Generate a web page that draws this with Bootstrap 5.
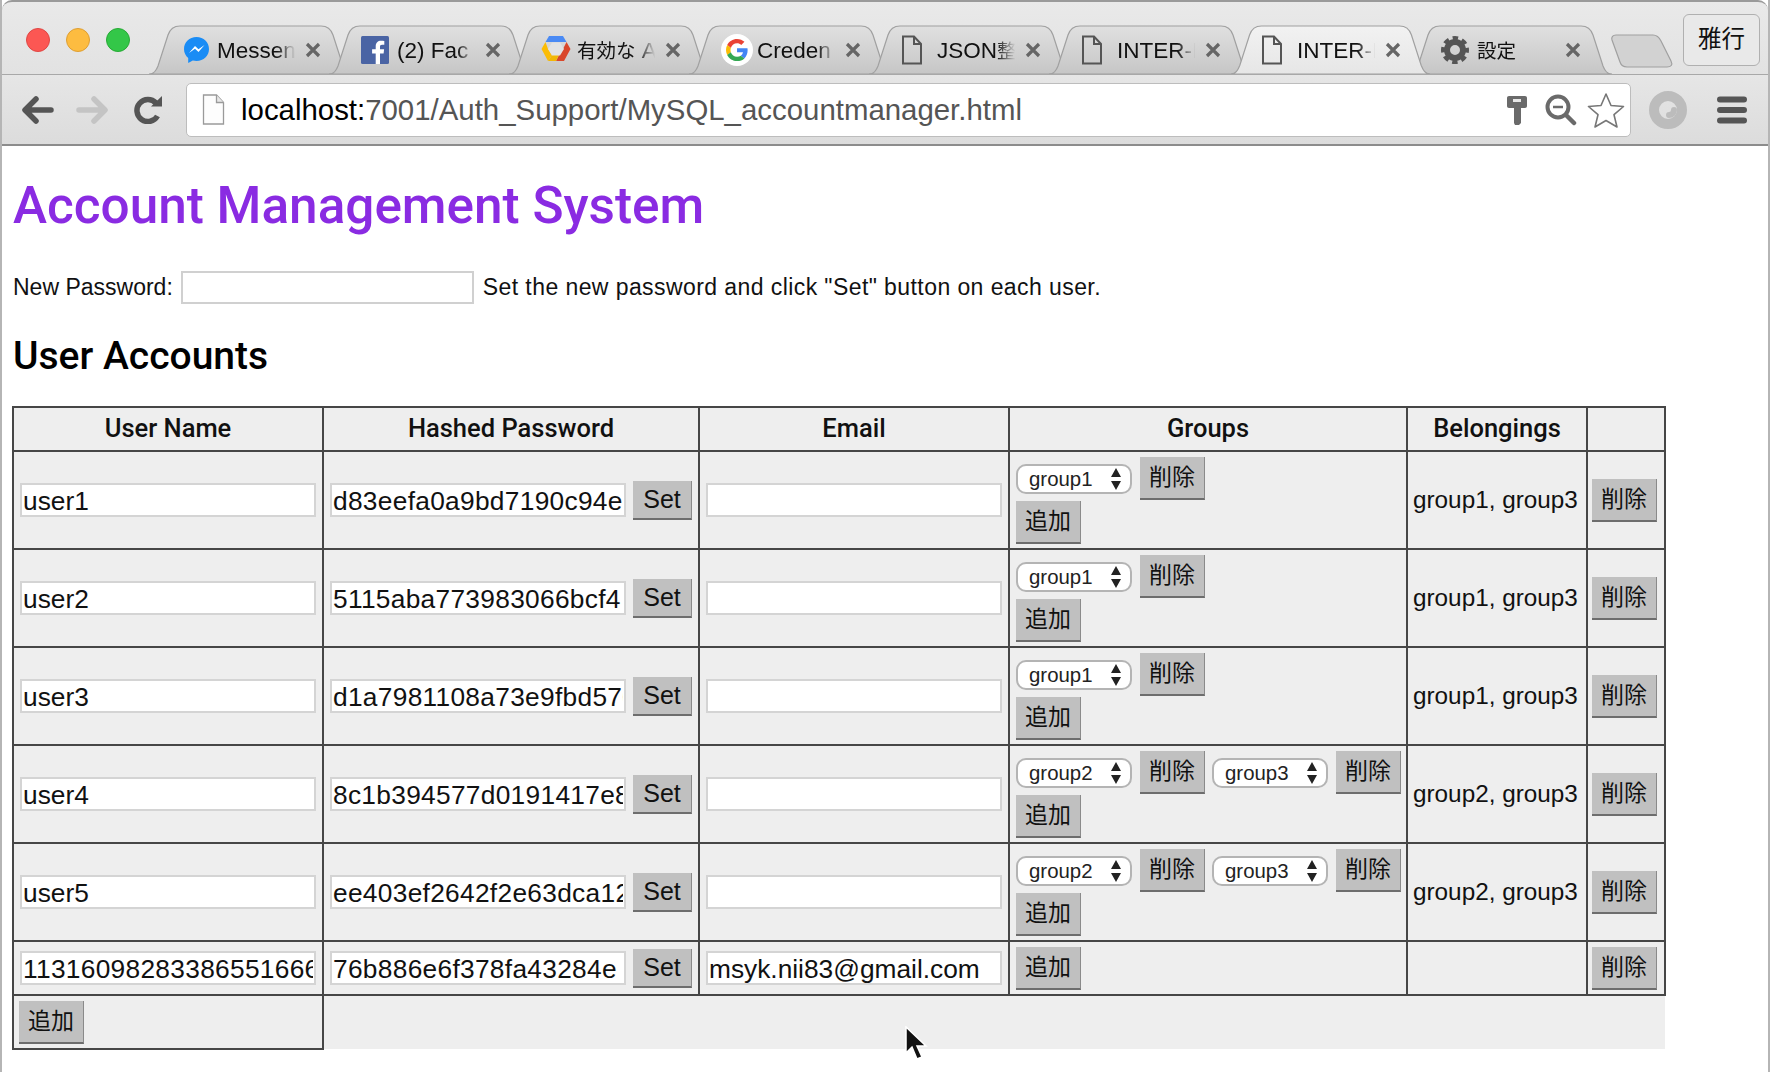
<!DOCTYPE html>
<html lang="ja">
<head>
  <meta charset="UTF-8" />
  <title>Account Management System</title>
  <link href="https://cdn.jsdelivr.net/npm/bootstrap@5.3.3/dist/css/bootstrap.min.css" rel="stylesheet"/>
  <style>
    html, body { height: 100%; }
    body {
      background: #fff;
      color: #111;
      font-family: "Liberation Sans", "Noto Sans CJK JP", sans-serif;
      overflow: hidden;
      border-left: 2px solid #b5b5b5;
      border-right: 2px solid #b5b5b5;
    }

    /* browser chrome */
    .tabstrip {
      height: 75px;
      padding-left: 147px;
      background: linear-gradient(#e9e9e9, #e2e2e2);
      border-top: 2px solid #9a9a9a;
      border-bottom: 1px solid #a8a8a8;
      border-top-left-radius: 10px;
      border-top-right-radius: 10px;
    }
    .traffic { left: 24px; top: 26px; }
    .dot { width: 24px; height: 24px; border-radius: 50%; }
    .dot-red { background: #fc5753; border: 1px solid #df4744; }
    .dot-amber { background: #fdbc40; border: 1px solid #de9f34; }
    .dot-green { background: #33c748; border: 1px solid #27aa35; }
    .tab-item {
      width: 203px;
      height: 49px;
      margin-top: 23px;
      margin-right: -23px;
      padding-left: 32px;
      font-size: 22.5px;
      color: #111;
    }
    .tab-item.is-active { z-index: 2; }
    .tab-shape { left: 0; top: 0; width: 203px; height: 49px; }
    .tab-icon { width: 36px; height: 30px; z-index: 1; }
    .msg-icon { margin-left: 2px; }
    .tab-title {
      width: 80px;
      padding-top: 2px;
      white-space: nowrap;
      overflow: hidden;
      z-index: 1;
      -webkit-mask-image: linear-gradient(to right, #000 75%, transparent 98%);
      mask-image: linear-gradient(to right, #000 75%, transparent 98%);
    }
    .cjk-part { font-size: 19.5px; }
    .tab-close { margin-left: 8px; z-index: 1; }
    .new-tab { left: 1607px; top: 32px; }
    .profile-btn {
      right: 8px;
      top: 12px;
      width: 77px;
      height: 52px;
      font-size: 23.5px;
      border: 1px solid #b0b0b0;
      border-radius: 6px;
      background: #e9e9e9;
    }
    .toolbar {
      height: 71px;
      background: linear-gradient(#e6e6e6, #dcdcdc);
      border-bottom: 2px solid #8c8c8c;
      padding-left: 20px;
    }
    .tool-slot { width: 54px; }
    .reload-icon { margin-left: 4px; }
    .urlbar {
      width: 1445px;
      height: 54px;
      margin-left: 2px;
      background: #fff;
      border: 1px solid #bdbdbd;
      border-radius: 5px;
      padding: 0 5px 0 15px;
      font-size: 29.4px;
      color: #555;
    }
    .url-host { color: #000; }
    .url-text { margin-left: 16px; padding-top: 1px; white-space: nowrap; }
    .url-key { margin-right: 17px; }
    .url-zoom { margin-right: 10px; }
    .ext-icon { margin-left: 18px; }
    .menu-icon { margin-left: 30px; }

    /* page */
    .page-body { padding: 0 0 0 10px; font-size: 23px; }
    .page-title {
      color: #8a2be2;
      font-family: Roboto, "Liberation Sans", sans-serif;
      font-size: 51.3px;
      font-weight: 500;
      line-height: 58px;
      margin: 31px 0 36px;
      padding-left: 1px;
    }
    .pw-row { height: 33px; gap: 8px; padding-left: 1px; }
    .pw-input {
      width: 293px;
      height: 33px;
      border: 2px solid #d0d0d0;
      border-radius: 0;
      padding: 0 2px;
    }
    .pw-note { margin-left: 1px; letter-spacing: .42px; }
    .sec-title {
      font-family: Roboto, "Liberation Sans", sans-serif;
      font-size: 39px;
      font-weight: 500;
      line-height: 44px;
      margin: 30px 0 28px;
      padding-left: 1px;
      color: #000;
    }
    .acct-table {
      --bs-table-bg: #eeeeee;
      --bs-table-color: #111;
      width: 1652px;
      table-layout: fixed;
      border-collapse: collapse;
      margin: 0;
    }
    .col-w1 { width: 310px; }
    .col-w2 { width: 376px; }
    .col-w3 { width: 310px; }
    .col-w4 { width: 398px; }
    .col-w5 { width: 180px; }
    .col-w6 { width: 78px; }
    .acct-table > * > tr > * {
      border: 2px solid #464646;
      padding: 0 6px;
      vertical-align: middle;
      background: #eee;
      box-shadow: none;
    }
    .acct-table th {
      height: 44px;
      font-family: Roboto, "Liberation Sans", sans-serif;
      font-size: 25.5px;
      font-weight: 500;
      text-align: center;
      padding: 0 0 2px;
    }
    .row-tall > td { height: 98px; }
    .row-short > td { height: 54px; }
    .row-add > td { height: 54px; padding: 0 5px; }
    .acct-table > tbody > tr > td.add-rest { border: 0; border-top: 2px solid #464646; }
    .acct-table > tbody > tr > td.row-del { padding-left: 4px; }
    .cell-input {
      display: block;
      width: 296px;
      height: 34px;
      border: 2px solid #d4d4d4;
      border-radius: 0;
      padding: 3px 1px 0;
      font-size: 26.3px;
      color: #111;
      background: #fff;
    }
    .cell-input:focus { outline: 0; box-shadow: none; }
    .hash-wrap { gap: 7px; }
    .hash-wrap .cell-input, .cell-input.is-digits { letter-spacing: .3px; }
    .act-btn {
      --bs-btn-padding-x: 0;
      --bs-btn-padding-y: 0;
      --bs-btn-bg: #c0c0c0;
      --bs-btn-color: #111;
      width: 65px;
      height: 43px;
      flex: none;
      font-size: 23px;
      line-height: 1;
      border: 0;
      border-right: 1px solid #8a8a8a;
      border-bottom: 2px solid #6d6d6d;
      border-radius: 0;
      background: #c0c0c0;
      color: #111;
    }
    .set-btn { width: 59px; height: 39px; font-size: 25px; }
    .group-line { gap: 7px; margin-top: 1px; }
    .group-pair { gap: 8px; }
    .group-select {
      width: 116px;
      height: 30px;
      padding: 0 0 0 11px;
      font-size: 20.4px;
      line-height: 26px;
      color: #222;
      border: 2px solid #b4b4b4;
      border-radius: 10px;
      background-color: #fff;
      background-size: 12px 24px;
      background-position: right 8px center;
      background-repeat: no-repeat;
      background-image: url("data:image/svg+xml,%3Csvg xmlns='http://www.w3.org/2000/svg' viewBox='0 0 12 24'%3E%3Cpath d='M6 1l5 9H1zM6 23l5-9H1z' fill='%23222'/%3E%3C/svg%3E");
    }
    .add-line { margin-top: 1px; }
    .acct-table > tbody > tr > td.belong-text { font-size: 24.3px; white-space: nowrap; padding: 0 0 0 5px; }
    .cursor-mark { left: 904px; top: 1026px; }
  </style>
</head>
<body>
  <div class="tabstrip d-flex position-relative">
    <div class="traffic d-flex gap-3 position-absolute">
      <div class="dot dot-red"></div>
      <div class="dot dot-amber"></div>
      <div class="dot dot-green"></div>
    </div>

    <div class="tab-item d-flex align-items-center position-relative">
      <svg class="tab-shape position-absolute" viewBox="0 0 203 49"><defs><linearGradient id="tabOff" x1="0" y1="0" x2="0" y2="1"><stop offset="0" stop-color="#e0e0e0"/><stop offset="1" stop-color="#c6c6c6"/></linearGradient><linearGradient id="tabOn" x1="0" y1="0" x2="0" y2="1"><stop offset="0" stop-color="#f2f2f2"/><stop offset="1" stop-color="#e6e6e6"/></linearGradient></defs><path d="M0 49C5 49 7 46 9 41L19 10C21 4 25 1 31 1H172C178 1 182 4 184 10L194 41C196 46 198 49 203 49Z" fill="url(#tabOff)" stroke="#a0a0a0" stroke-width="1.2"/></svg>
      <div class="tab-icon position-relative d-flex align-items-center">
        <svg class="msg-icon" width="27" height="28" viewBox="0 0 27 28"><path d="M13.5 1C6.300 1 1 6.200 1 13c0 3.700 1.600 6.800 4.200 9v5l4.600-2.500c1.200.3 2.400.5 3.700.5C20.700 25 26 19.800 26 13S20.700 1 13.500 1z" fill="#1a8cf5"/><path d="M6 17l6-7 3.500 3.300L21.500 9l-6 7-3.500-3.300z" fill="#fff"/></svg>
      </div>
      <div class="tab-title position-relative">Messen</div>
      <svg class="tab-close" width="16" height="16" viewBox="0 0 16 16"><path d="M2 2l12 12M14 2L2 14" stroke="#666" stroke-width="3.200"/></svg>
    </div>

    <div class="tab-item d-flex align-items-center position-relative">
      <svg class="tab-shape position-absolute" viewBox="0 0 203 49"><path d="M0 49C5 49 7 46 9 41L19 10C21 4 25 1 31 1H172C178 1 182 4 184 10L194 41C196 46 198 49 203 49Z" fill="url(#tabOff)" stroke="#a0a0a0" stroke-width="1.2"/></svg>
      <div class="tab-icon position-relative d-flex align-items-center">
        <svg width="28" height="28" viewBox="0 0 28 28"><rect width="28" height="28" rx="1.500" fill="#4a64a4"/><path d="M19 28V17.500h3.600l.5-4.200H19v-2.600c0-1.200.4-2 2.100-2h2.200V5c-.4 0-1.700-.2-3.200-.2-3.200 0-5.400 2-5.400 5.500v3h-3.600v4.200h3.600V28z" fill="#fff"/></svg>
      </div>
      <div class="tab-title position-relative">(2) Fac</div>
      <svg class="tab-close" width="16" height="16" viewBox="0 0 16 16"><path d="M2 2l12 12M14 2L2 14" stroke="#666" stroke-width="3.200"/></svg>
    </div>

    <div class="tab-item d-flex align-items-center position-relative">
      <svg class="tab-shape position-absolute" viewBox="0 0 203 49"><path d="M0 49C5 49 7 46 9 41L19 10C21 4 25 1 31 1H172C178 1 182 4 184 10L194 41C196 46 198 49 203 49Z" fill="url(#tabOff)" stroke="#a0a0a0" stroke-width="1.2"/></svg>
      <div class="tab-icon position-relative d-flex align-items-center">
        <svg width="30" height="30" viewBox="0 0 30 30"><path d="M8 1h14l3.500 6H4.500z" fill="#4a8af4"/><path d="M4.500 7L0.500 14l6.500 12 4-6-4-6z" fill="#fbbc05"/><path d="M25.500 7l4 7-6.500 12h-8l3-6 4-6z" fill="#d9472b"/><path d="M7 26h8l3-6h-7z" fill="#f2b705"/><path d="M11 7.500h8l4 6.500-4 6.500h-8L7 14z" fill="#e3e3e3"/></svg>
      </div>
      <div class="tab-title position-relative"><span class="cjk-part">有効な</span> A</div>
      <svg class="tab-close" width="16" height="16" viewBox="0 0 16 16"><path d="M2 2l12 12M14 2L2 14" stroke="#666" stroke-width="3.200"/></svg>
    </div>

    <div class="tab-item d-flex align-items-center position-relative">
      <svg class="tab-shape position-absolute" viewBox="0 0 203 49"><path d="M0 49C5 49 7 46 9 41L19 10C21 4 25 1 31 1H172C178 1 182 4 184 10L194 41C196 46 198 49 203 49Z" fill="url(#tabOff)" stroke="#a0a0a0" stroke-width="1.2"/></svg>
      <div class="tab-icon position-relative d-flex align-items-center">
        <svg width="32" height="32" viewBox="0 0 32 32"><circle cx="16" cy="16" r="16" fill="#fff"/><g transform="translate(5 5) scale(.46)"><path fill="#EA4335" d="M24 9.500c3.500 0 6.700 1.200 9.200 3.600l6.900-6.900C35.900 2.400 30.500 0 24 0 14.600 0 6.500 5.400 2.600 13.200l8 6.200C12.400 13.700 17.700 9.500 24 9.500z"/><path fill="#4285F4" d="M47 24.500c0-1.600-.1-3.100-.4-4.500H24v9h12.900c-.6 3-2.200 5.500-4.700 7.200l7.700 6c4.500-4.200 7.100-10.300 7.100-17.700z"/><path fill="#FBBC05" d="M10.600 28.600c-.5-1.400-.8-3-.8-4.600s.3-3.200.8-4.600l-8-6.200C.9 16.500 0 20.100 0 24s.9 7.500 2.600 10.800z"/><path fill="#34A853" d="M24 48c6.500 0 11.900-2.100 15.900-5.800l-7.700-6c-2.200 1.400-4.900 2.300-8.200 2.300-6.300 0-11.600-4.200-13.500-9.900l-8 6.200C6.500 42.600 14.600 48 24 48z"/></g></svg>
      </div>
      <div class="tab-title position-relative">Creden</div>
      <svg class="tab-close" width="16" height="16" viewBox="0 0 16 16"><path d="M2 2l12 12M14 2L2 14" stroke="#666" stroke-width="3.200"/></svg>
    </div>

    <div class="tab-item d-flex align-items-center position-relative">
      <svg class="tab-shape position-absolute" viewBox="0 0 203 49"><path d="M0 49C5 49 7 46 9 41L19 10C21 4 25 1 31 1H172C178 1 182 4 184 10L194 41C196 46 198 49 203 49Z" fill="url(#tabOff)" stroke="#a0a0a0" stroke-width="1.2"/></svg>
      <div class="tab-icon position-relative d-flex align-items-center">
        <svg width="22" height="30" viewBox="0 0 22 30"><path d="M2 1.500h11l7 7.500v19.500H2zM13 1.500V9h7" fill="none" stroke="#555" stroke-width="2"/></svg>
      </div>
      <div class="tab-title position-relative">JSON<span class="cjk-part">整</span></div>
      <svg class="tab-close" width="16" height="16" viewBox="0 0 16 16"><path d="M2 2l12 12M14 2L2 14" stroke="#666" stroke-width="3.200"/></svg>
    </div>

    <div class="tab-item d-flex align-items-center position-relative">
      <svg class="tab-shape position-absolute" viewBox="0 0 203 49"><path d="M0 49C5 49 7 46 9 41L19 10C21 4 25 1 31 1H172C178 1 182 4 184 10L194 41C196 46 198 49 203 49Z" fill="url(#tabOff)" stroke="#a0a0a0" stroke-width="1.2"/></svg>
      <div class="tab-icon position-relative d-flex align-items-center">
        <svg width="22" height="30" viewBox="0 0 22 30"><path d="M2 1.500h11l7 7.500v19.500H2zM13 1.500V9h7" fill="none" stroke="#555" stroke-width="2"/></svg>
      </div>
      <div class="tab-title position-relative">INTER-I</div>
      <svg class="tab-close" width="16" height="16" viewBox="0 0 16 16"><path d="M2 2l12 12M14 2L2 14" stroke="#666" stroke-width="3.200"/></svg>
    </div>

    <div class="tab-item is-active d-flex align-items-center position-relative">
      <svg class="tab-shape position-absolute" viewBox="0 0 203 50"><path d="M0 50C5 50 7 46 9 41L19 10C21 4 25 1 31 1H172C178 1 182 4 184 10L194 41C196 46 198 50 203 50Z" fill="url(#tabOn)" stroke="#a0a0a0" stroke-width="1.2"/></svg>
      <div class="tab-icon position-relative d-flex align-items-center">
        <svg width="22" height="30" viewBox="0 0 22 30"><path d="M2 1.500h11l7 7.500v19.500H2zM13 1.500V9h7" fill="none" stroke="#555" stroke-width="2"/></svg>
      </div>
      <div class="tab-title position-relative">INTER-I</div>
      <svg class="tab-close" width="16" height="16" viewBox="0 0 16 16"><path d="M2 2l12 12M14 2L2 14" stroke="#666" stroke-width="3.200"/></svg>
    </div>

    <div class="tab-item d-flex align-items-center position-relative">
      <svg class="tab-shape position-absolute" viewBox="0 0 203 49"><path d="M0 49C5 49 7 46 9 41L19 10C21 4 25 1 31 1H172C178 1 182 4 184 10L194 41C196 46 198 49 203 49Z" fill="url(#tabOff)" stroke="#a0a0a0" stroke-width="1.2"/></svg>
      <div class="tab-icon position-relative d-flex align-items-center">
        <svg width="28" height="28" viewBox="0 0 28 28"><circle cx="14" cy="14" r="8" fill="none" stroke="#555" stroke-width="6"/><circle cx="14" cy="14" r="12" fill="none" stroke="#555" stroke-width="4" stroke-dasharray="5.400 4.025" stroke-dashoffset="2.700"/></svg>
      </div>
      <div class="tab-title position-relative"><span class="cjk-part">設定</span></div>
      <svg class="tab-close" width="16" height="16" viewBox="0 0 16 16"><path d="M2 2l12 12M14 2L2 14" stroke="#666" stroke-width="3.200"/></svg>
    </div>

    <svg class="new-tab position-absolute" width="66" height="34" viewBox="0 0 66 34"><path d="M3 6C2 3 4 1 7 1H44C48 1 50 3 52 7L62 27C64 31 62 33 58 33H18C14 33 12 31 11 28Z" fill="#d2d2d2" stroke="#a0a0a0" stroke-width="1.200"/></svg>
    <div class="profile-btn position-absolute d-flex align-items-center justify-content-center">雅行</div>
  </div>

  <div class="toolbar d-flex align-items-center">
    <div class="tool-slot">
      <svg class="d-block" width="32" height="28" viewBox="0 0 32 28"><path d="M14 3L3 14l11 11M4 14h25" fill="none" stroke="#555" stroke-width="5.500" stroke-linecap="round" stroke-linejoin="round"/></svg>
    </div>
    <div class="tool-slot">
      <svg class="d-block" width="32" height="28" viewBox="0 0 32 28"><path d="M18 3l11 11-11 11M28 14H3" fill="none" stroke="#c4c4c4" stroke-width="5.500" stroke-linecap="round" stroke-linejoin="round"/></svg>
    </div>
    <div class="tool-slot">
      <svg class="d-block reload-icon" width="30" height="28" viewBox="0 0 30 28"><path d="M23.500 20A11 11 0 1 1 22 7" fill="none" stroke="#555" stroke-width="5.500"/><path d="M17 10.500H28V0z" fill="#555"/></svg>
    </div>
    <div class="urlbar d-flex align-items-center">
      <svg width="23" height="31" viewBox="0 0 23 31"><path d="M1.500 1h13l7 7.500V30h-20z" fill="#fdfdfd" stroke="#9a9a9a" stroke-width="1.300"/><path d="M14.500 1v7.500h7" fill="#e8e8e8" stroke="#9a9a9a" stroke-width="1.300"/></svg>
      <div class="url-text flex-grow-1"><span class="url-host">localhost:</span>7001/Auth_Support/MySQL_accountmanager.html</div>
      <svg width="22" height="30" viewBox="0 0 22 30" class="url-key"><path d="M3 1h16c1.200 0 2 .8 2 2v8c0 1.200-.8 2-2 2h-4v15l-2 2H9l-1-2V13H3c-1.200 0-2-.8-2-2V3c0-1.200.8-2 2-2z" fill="#6a6a6a"/><rect x="7" y="4" width="8" height="3" fill="#e8e8e8"/></svg>
      <svg width="32" height="32" viewBox="0 0 32 32" class="url-zoom"><circle cx="13" cy="13" r="10.500" fill="none" stroke="#6a6a6a" stroke-width="4"/><path d="M8 13h10" stroke="#6a6a6a" stroke-width="2.500"/><path d="M21 21l8 8" stroke="#6a6a6a" stroke-width="4.500" stroke-linecap="round"/></svg>
      <svg width="38" height="36" viewBox="0 0 38 36"><path d="M19 2l5 11.500 12.500 1-9.500 8.200 3 12.300L19 28.500 8 35l3-12.300L1.500 14.500l12.500-1z" fill="#fff" stroke="#777" stroke-width="1.600" stroke-linejoin="round"/></svg>
    </div>
    <svg class="ext-icon" width="38" height="38" viewBox="0 0 38 38"><circle cx="19" cy="19" r="14" fill="none" stroke="#bcbcbc" stroke-width="10"/><path d="M25 19a5 5 0 0 1-5 5" fill="none" stroke="#bcbcbc" stroke-width="6" stroke-linecap="round"/></svg>
    <svg class="menu-icon" width="30" height="28" viewBox="0 0 30 28"><path d="M3 3.500h24M3 14h24M3 24.500h24" stroke="#555" stroke-width="6" stroke-linecap="round"/></svg>
  </div>

  <div class="page-body">
    <h1 class="page-title">Account Management System</h1>
    <div class="pw-row d-flex align-items-center">
      <span>New Password:</span>
      <input class="pw-input form-control flex-grow-0" type="password">
      <span class="pw-note">Set the new password and click "Set" button on each user.</span>
    </div>
    <h2 class="sec-title">User Accounts</h2>

    <table class="table acct-table">
      <colgroup>
        <col class="col-w1"><col class="col-w2"><col class="col-w3"><col class="col-w4"><col class="col-w5"><col class="col-w6">
      </colgroup>
      <thead>
        <tr><th>User Name</th><th>Hashed Password</th><th>Email</th><th>Groups</th><th>Belongings</th><th></th></tr>
      </thead>
      <tbody>
        <tr class="row-tall">
          <td><input class="cell-input" value="user1"></td>
          <td><div class="hash-wrap d-flex align-items-center"><input class="cell-input" value="d83eefa0a9bd7190c94e"><button class="btn act-btn set-btn">Set</button></div></td>
          <td><input class="cell-input"></td>
          <td>
            <div class="group-line d-flex"><div class="group-pair d-flex align-items-center"><select class="form-select group-select"><option>group1</option></select><button class="btn act-btn">削除</button></div></div>
            <div class="add-line"><button class="btn act-btn">追加</button></div>
          </td>
          <td class="belong-text">group1, group3</td>
          <td class="row-del"><button class="btn act-btn">削除</button></td>
        </tr>
        <tr class="row-tall">
          <td><input class="cell-input" value="user2"></td>
          <td><div class="hash-wrap d-flex align-items-center"><input class="cell-input" value="5115aba773983066bcf4"><button class="btn act-btn set-btn">Set</button></div></td>
          <td><input class="cell-input"></td>
          <td>
            <div class="group-line d-flex"><div class="group-pair d-flex align-items-center"><select class="form-select group-select"><option>group1</option></select><button class="btn act-btn">削除</button></div></div>
            <div class="add-line"><button class="btn act-btn">追加</button></div>
          </td>
          <td class="belong-text">group1, group3</td>
          <td class="row-del"><button class="btn act-btn">削除</button></td>
        </tr>
        <tr class="row-tall">
          <td><input class="cell-input" value="user3"></td>
          <td><div class="hash-wrap d-flex align-items-center"><input class="cell-input" value="d1a7981108a73e9fbd5703"><button class="btn act-btn set-btn">Set</button></div></td>
          <td><input class="cell-input"></td>
          <td>
            <div class="group-line d-flex"><div class="group-pair d-flex align-items-center"><select class="form-select group-select"><option>group1</option></select><button class="btn act-btn">削除</button></div></div>
            <div class="add-line"><button class="btn act-btn">追加</button></div>
          </td>
          <td class="belong-text">group1, group3</td>
          <td class="row-del"><button class="btn act-btn">削除</button></td>
        </tr>
        <tr class="row-tall">
          <td><input class="cell-input" value="user4"></td>
          <td><div class="hash-wrap d-flex align-items-center"><input class="cell-input" value="8c1b394577d0191417e8"><button class="btn act-btn set-btn">Set</button></div></td>
          <td><input class="cell-input"></td>
          <td>
            <div class="group-line d-flex">
              <div class="group-pair d-flex align-items-center"><select class="form-select group-select"><option>group2</option></select><button class="btn act-btn">削除</button></div>
              <div class="group-pair d-flex align-items-center"><select class="form-select group-select"><option>group3</option></select><button class="btn act-btn">削除</button></div>
            </div>
            <div class="add-line"><button class="btn act-btn">追加</button></div>
          </td>
          <td class="belong-text">group2, group3</td>
          <td class="row-del"><button class="btn act-btn">削除</button></td>
        </tr>
        <tr class="row-tall">
          <td><input class="cell-input" value="user5"></td>
          <td><div class="hash-wrap d-flex align-items-center"><input class="cell-input" value="ee403ef2642f2e63dca123"><button class="btn act-btn set-btn">Set</button></div></td>
          <td><input class="cell-input"></td>
          <td>
            <div class="group-line d-flex">
              <div class="group-pair d-flex align-items-center"><select class="form-select group-select"><option>group2</option></select><button class="btn act-btn">削除</button></div>
              <div class="group-pair d-flex align-items-center"><select class="form-select group-select"><option>group3</option></select><button class="btn act-btn">削除</button></div>
            </div>
            <div class="add-line"><button class="btn act-btn">追加</button></div>
          </td>
          <td class="belong-text">group2, group3</td>
          <td class="row-del"><button class="btn act-btn">削除</button></td>
        </tr>
        <tr class="row-short">
          <td><input class="cell-input is-digits" value="1131609828338655166666"></td>
          <td><div class="hash-wrap d-flex align-items-center"><input class="cell-input" value="76b886e6f378fa43284e"><button class="btn act-btn set-btn">Set</button></div></td>
          <td><input class="cell-input" value="msyk.nii83@gmail.com"></td>
          <td><button class="btn act-btn">追加</button></td>
          <td></td>
          <td class="row-del"><button class="btn act-btn">削除</button></td>
        </tr>
        <tr class="row-add">
          <td><button class="btn act-btn">追加</button></td>
          <td class="add-rest" colspan="5"></td>
        </tr>
      </tbody>
    </table>
  </div>

  <svg class="cursor-mark position-absolute" width="24" height="36" viewBox="0 0 24 36"><path d="M2 1v26l6-6 5 12 5-2-5-11h9z" fill="#111" stroke="#fff" stroke-width="1.500"/></svg>

  <script src="https://cdn.jsdelivr.net/npm/bootstrap@5.3.3/dist/js/bootstrap.bundle.min.js"></script>
</body>
</html>
